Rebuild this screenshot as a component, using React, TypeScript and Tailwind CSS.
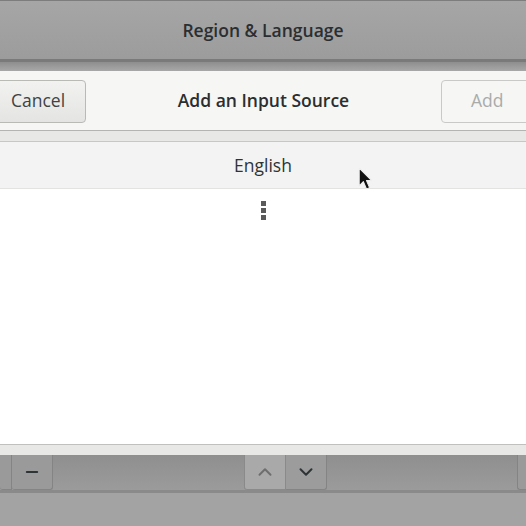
import { ChevronDown, ChevronUp, Minus } from "lucide-react";

const font = { fontFamily: '"Open Sans", "Noto Sans", sans-serif' };

function Cursor() {
  return (
    <svg
      className="absolute left-[358px] top-[167px]"
      width="17"
      height="25"
      viewBox="0 0 16 24"
    >
      <path
        d="M1 1 L1 18 L5 14 L8 21 L11 20 L8 13 L13 13 Z"
        fill="#111"
        stroke="#eee"
        strokeWidth="1"
        strokeLinejoin="round"
      />
    </svg>
  );
}

export default function App() {
  return (
    <div
      className="relative flex h-[526px] w-[526px] flex-col overflow-hidden bg-[#a3a3a3] text-[#2e3436]"
      style={font}
    >
      {/* window title bar */}
      <div className="flex h-[59px] items-center justify-center border-t border-[#7d7d7d] bg-gradient-to-b from-[#a6a6a6] to-[#9c9c9c]">
        <span className="text-[17.5px] font-semibold text-[#2b2e30]">
          Region &amp; Language
        </span>
      </div>
      <div className="h-[3px] bg-[#7a7a7a]" />
      <div className="h-[9px] bg-gradient-to-b from-[#8e8e8e] to-[#a8a8a8]" />

      {/* dialog */}
      <div className="flex flex-col bg-white">
        <div className="flex h-[59px] items-center justify-between bg-[#f6f6f5] pt-[1px]">
          <button className="ml-[-10px] flex h-[43px] w-[96px] items-center justify-center rounded-[4px] border border-[#b9b9b6] bg-gradient-to-b from-[#f2f2f1] to-[#e4e4e2] pb-[2px] text-[17.5px] text-[#3d4245]">
            Cancel
          </button>
          <span className="pb-[2px] text-[17.5px] font-semibold text-[#2b2e30]">
            Add an Input Source
          </span>
          <button className="mr-[-16px] flex h-[43px] w-[101px] items-center justify-start rounded-[4px] border border-[#c9c9c7] bg-[#f6f6f5] pb-[2px] pl-[29px] text-[17.5px] text-[#a9abab]">
            Add
          </button>
        </div>
        <div className="h-[1px] bg-[#b4b4b2]" />
        <div className="h-[10px] bg-[#e8e8e7]" />
        <div className="h-[1px] bg-[#c7c7c5]" />
        <div className="flex h-[46px] items-center justify-center bg-[#f3f3f3] text-[17.5px] text-[#2e3436]">
          English
        </div>
        <div className="h-[1px] bg-[#e3e3e2]" />
        <div className="flex h-[255px] flex-col items-center bg-white pt-[12px]">
          <div className="flex flex-col gap-[2px]">
            <div className="h-[5px] w-[5px] bg-[#5a5a5a]" />
            <div className="h-[5px] w-[5px] bg-[#5a5a5a]" />
            <div className="h-[5px] w-[5px] bg-[#5a5a5a]" />
          </div>
        </div>
        <div className="h-[1px] bg-[#c0c0be]" />
        <div className="h-[10px] bg-[#e8e8e7]" />
      </div>

      {/* toolbar behind dialog */}
      <div className="flex h-[35px] items-stretch bg-gradient-to-b from-[#8f8f8f] to-[#9b9b9b]">
        <div className="w-[12px] rounded-bl-[3px] border-b border-r border-[#848484] bg-[#9a9a9a]" />
        <div className="flex w-[41px] items-center justify-center rounded-b-[3px] border-b border-r border-[#848484] bg-[#9a9a9a]">
          <Minus className="h-[18px] w-[18px] text-[#2e3436]" strokeWidth={2.5} />
        </div>
        <div className="flex-1" />
        <div className="flex">
          <div className="flex w-[42px] items-center justify-center rounded-bl-[3px] border-b border-l border-r border-[#8a8a8a] bg-[#a9a9a9]">
            <ChevronUp className="h-[22px] w-[22px] text-[#6e6e6e]" strokeWidth={2.2} />
          </div>
          <div className="flex w-[41px] items-center justify-center rounded-br-[3px] border-b border-r border-[#848484] bg-[#9c9c9c]">
            <ChevronDown className="h-[22px] w-[22px] text-[#2e3436]" strokeWidth={2.2} />
          </div>
        </div>
        <div className="flex-1" />
        <div className="w-[9px] rounded-bl-[3px] border-b border-l border-[#848484] bg-[#9a9a9a]" />
      </div>
      <div className="h-[3px] bg-[#8a8a8a]" />
      <div className="flex-1 bg-[#a3a3a3]" />

      <Cursor />
    </div>
  );
}
